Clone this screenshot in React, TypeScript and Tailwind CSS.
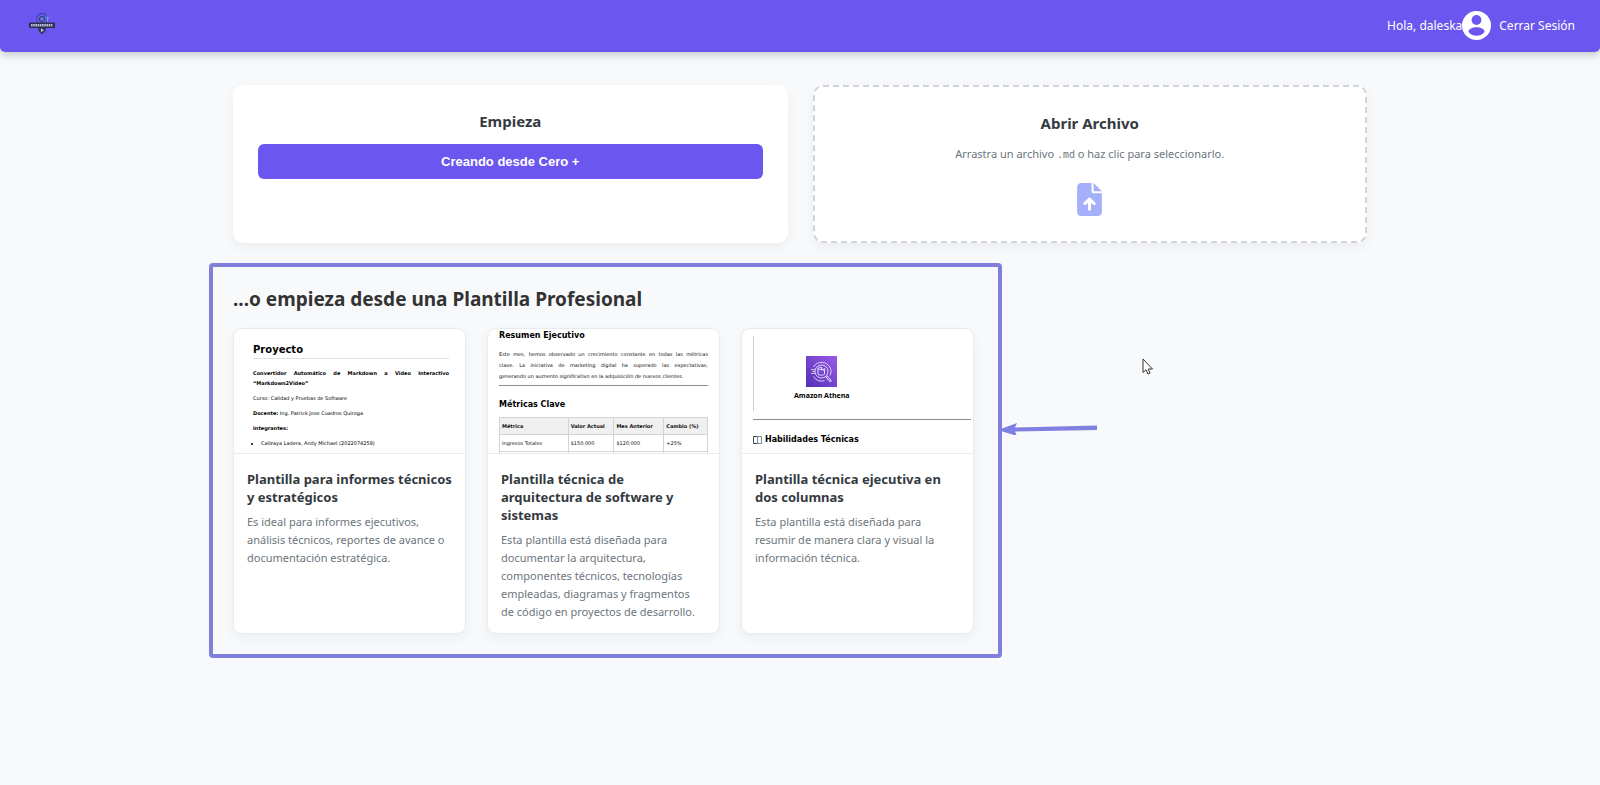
import React from "react";
import { FaFileArrowUp } from "react-icons/fa6";

function Logo() {
  return (
    <svg viewBox="0 0 28 22" className="h-[22px] w-7" role="img" aria-label="Markdown2Video">
      <circle cx="14" cy="6" r="5.5" fill="none" stroke="#3e4aa8" strokeWidth="1.3" />
      <circle cx="14" cy="6" r="2.6" fill="#6a74cc" stroke="#2f3573" />
      <path d="M19.5 9V4M18 5.5 19.5 3.5 21 5.5" stroke="#5f9fe8" fill="none" />
      <path d="M9.5 13h9l-1 5-3.5 3.500-3.500-3.500z" fill="#343a63" />
      <path d="m13 15.500 3 1.700-3 1.700z" fill="#c9d0e4" />
      <rect x="1" y="9.500" width="26" height="5.500" rx="1" fill="#2c3050" />
      <path d="M3 12.200h22" stroke="#bcc1d8" strokeWidth="2.400" strokeDasharray="1.600 .6" />
    </svg>
  );
}

function UserIcon() {
  return (
    <svg viewBox="0 0 29 29" className="size-[29px]" aria-hidden="true">
      <circle cx="14.500" cy="14.500" r="14.500" fill="#fff" />
      <circle cx="14.500" cy="9" r="4.900" fill="#6c56f0" />
      <path d="M6.500 20.800c0-3 4-4.600 8-4.600s8 1.600 8 4.600c-1.500 2.600-4.500 4-8 4s-6.500-1.400-8-4z" fill="#6c56f0" />
    </svg>
  );
}

function AthenaIcon() {
  return (
    <svg viewBox="0 0 31 31" className="size-[31px]" aria-hidden="true">
      <defs>
        <linearGradient id="athena" x1="0" y1="1" x2="1" y2="0">
          <stop offset="0" stopColor="#5130b5" />
          <stop offset="1" stopColor="#9a5ae6" />
        </linearGradient>
      </defs>
      <rect width="31" height="31" fill="url(#athena)" />
      <g fill="none" stroke="#e9defa">
        <path d="M7.500 11a9.500 9.500 0 0 1 17 1.500c1 3 .6 5-.5 7M7.500 20.500a9.500 9.500 0 0 0 11 4.200" strokeWidth="0.900" />
        <circle cx="15.500" cy="15.500" r="6.500" strokeWidth="0.900" />
        <path d="m20 20 5 5.500" strokeWidth="2.600" />
        <path d="m20.500 20.500 4 4.500" stroke="#7d48cf" strokeWidth="1" />
        <path d="M12 12.500v5.500c0 1.500 6.500 1.500 6.500 0v-5.500M12 12.500c0-1.300 3-1.300 3.500-1.300M12 12.500c0 1.200 6.500 1.200 6.500 0M15.500 11v3h3" />
        <path d="M5 13.500h4M6 15.500h3M5 17.500h4" strokeWidth="0.800" />
      </g>
    </svg>
  );
}

function ReportPreview() {
  return (
    <div className="pt-[14px] pr-4 pl-[19px] text-[5px] leading-[10px] text-black">
      <p className="border-b border-[#e2e2e2] pb-[2px] text-[10px] leading-[13px] font-bold">Proyecto</p>
      <p className="mt-[9px] text-justify font-bold">
        Convertidor Automático de Markdown a Video Interactivo “Markdown2Video”
      </p>
      <p className="mt-[5px]">Curso: Calidad y Pruebas de Software</p>
      <p className="mt-[5px]"><b>Docente:</b> Ing. Patrick Jose Cuadros Quiroga</p>
      <p className="mt-[5px] font-bold">Integrantes:</p>
      <ul className="mt-[5px] list-disc pl-2">
        <li>Calizaya Ladera, Andy Michael (2022074258)</li>
      </ul>
    </div>
  );
}

function MetricsPreview() {
  return (
    <div className="px-[11px] pt-[2px] text-[5px] text-[#111]">
      <p className="text-[8px] leading-[10px] font-bold text-black">Resumen Ejecutivo</p>
      <p className="mt-2 leading-[11px]">
        <span className="block [text-align-last:justify]">
          Este mes, hemos observado un crecimiento constante en todas las métricas
        </span>
        <span className="block [text-align-last:justify]">
          clave. La iniciativa de marketing digital ha superado las expectativas,
        </span>
        <span className="block">generando un aumento significativo en la adquisición de nuevos clientes.</span>
      </p>
      <hr className="mt-[3px] border-[#8c8c8c]" />
      <p className="mt-[14px] text-[8px] leading-[10px] font-bold text-black">Métricas Clave</p>
      <table className="mt-[7px] w-full border-collapse text-left leading-[6px] [&_td]:border [&_td]:border-[#d4d4d4] [&_td]:px-[2px] [&_td]:py-[5px] [&_th]:border [&_th]:border-[#d4d4d4] [&_th]:bg-[#f0f0f0] [&_th]:px-[2px] [&_th]:py-[5px]">
        <thead>
          <tr>
            <th className="w-[33%]">Métrica</th>
            <th className="w-[22%]">Valor Actual</th>
            <th className="w-[24%]">Mes Anterior</th>
            <th>Cambio (%)</th>
          </tr>
        </thead>
        <tbody>
          <tr><td>Ingresos Totales</td><td>$150,000</td><td>$120,000</td><td>+25%</td></tr>
          <tr><td /><td /><td /><td /></tr>
        </tbody>
      </table>
    </div>
  );
}

function SkillsPreview() {
  return (
    <div className="pt-[7px] pr-[2px] pl-[11px] text-black">
      <div className="flex h-[75px] border-l border-[#cfcfcf] pt-5 pl-10">
        <div className="flex flex-col items-center gap-1">
          <AthenaIcon />
          <span className="font-['Open_Sans',sans-serif] text-[7px] leading-[10px] font-bold">Amazon Athena</span>
        </div>
      </div>
      <hr className="mt-2 border-[#8c8c8c]" />
      <p className="mt-[15px] flex items-center gap-[3px] text-[8px] leading-[10px] font-bold">
        <svg viewBox="0 0 9 8" className="h-2 w-[9px]" fill="none" aria-hidden="true">
          <path d="M.5.5h4v7h-4z" stroke="#444" />
          <path d="M4.500.5h4v7h-4z" stroke="#6d8ba5" />
        </svg>
        Habilidades Técnicas
      </p>
    </div>
  );
}

const templates = [
  {
    title: "Plantilla para informes técnicos y estratégicos",
    text: "Es ideal para informes ejecutivos, análisis técnicos, reportes de avance o documentación estratégica.",
    Preview: ReportPreview,
  },
  {
    title: "Plantilla técnica de arquitectura de software y sistemas",
    text: "Esta plantilla está diseñada para documentar la arquitectura, componentes técnicos, tecnologías empleadas, diagramas y fragmentos de código en proyectos de desarrollo.",
    Preview: MetricsPreview,
  },
  {
    title: "Plantilla técnica ejecutiva en dos columnas",
    text: "Esta plantilla está diseñada para resumir de manera clara y visual la información técnica.",
    Preview: SkillsPreview,
  },
];

export default function App() {
  return (
    <div className="relative min-h-screen bg-[#f8f9fb] font-['Noto_Sans',sans-serif] text-[#343a40]">
      <header className="flex h-[52px] items-center justify-between rounded-b-[5px] bg-[#6c56f0] pr-[25px] pb-px pl-7 text-[12px] text-white shadow-[0_3px_8px_rgba(0,0,0,0.2)]">
        <a href="#inicio" className="pb-1"><Logo /></a>
        <nav className="flex items-center">
          <span>Hola, daleska</span>
          <UserIcon />
          <a href="#salir" className="ml-2">Cerrar Sesión</a>
        </nav>
      </header>

      <main className="mx-auto max-w-[1182px] px-6 pt-[33px]">
        <div className="grid grid-cols-2 gap-[25px]">
          <section className="rounded-[10px] bg-white p-[25px] text-center shadow-[0_4px_12px_rgba(0,0,0,0.05)]">
            <h2 className="text-[15px] leading-[22px] font-bold">Empieza</h2>
            <button type="button" className="mt-3 h-[35px] w-full rounded-[6px] bg-[#6c56f0] font-['Liberation_Sans',sans-serif] text-[13px] font-bold text-white">
              Creando desde Cero +
            </button>
          </section>
          <label className="flex cursor-pointer flex-col items-center rounded-[10px] border-2 border-dashed border-[#d0d4d9] bg-white p-[25px] text-center shadow-[0_4px_12px_rgba(0,0,0,0.05)]">
            <input type="file" accept=".md" className="sr-only" />
            <span className="text-[15px] leading-[22px] font-bold">Abrir Archivo</span>
            <span className="mt-[10px] text-[11px] leading-5 text-[#6c757d]">
              Arrastra un archivo <code className="font-['Liberation_Mono',monospace] text-[10px]">.md</code> o haz clic para seleccionarlo.
            </span>
            <FaFileArrowUp className="mt-[17px] h-[33px] w-[25px] text-[#a5b0fb]" />
          </label>
        </div>

        <section className="relative mt-5 -ml-6 max-w-[793px] rounded-[4px] border-4 border-[#8080dc] pt-5 pr-6 pb-5 pl-5">
          <h1 className="text-[19px] leading-6 font-bold text-[#333]">...o empieza desde una Plantilla Profesional</h1>
          <div className="mt-[17px] grid grid-cols-3 gap-[21px]">
            {templates.map(({ title, text, Preview }) => (
              <article key={title} className="overflow-hidden rounded-[9px] border border-[#e9ecef] bg-white shadow-[0_4px_12px_rgba(0,0,0,0.05)]">
                <div className="h-[125px] overflow-hidden border-b border-[#e9ecef] font-['DejaVu_Sans',sans-serif]">
                  <Preview />
                </div>
                <div className="pt-4 pr-3 pb-3 pl-[13px]">
                  <h3 className="text-[13px] leading-[18px] font-bold">{title}</h3>
                  <p className="mt-[7px] pr-[2px] text-[11px] leading-[18px] text-[#6c757d]">{text}</p>
                </div>
              </article>
            ))}
          </div>
          <svg viewBox="0 0 100 16" className="absolute top-[152px] left-full h-4 w-[100px]" aria-hidden="true">
            <path d="M0 11 19 4l-2 4.500L99 6.500v4.500l-82 1.500 2 4.500z" fill="#8080e0" />
          </svg>
        </section>
      </main>

      <svg viewBox="0 0 12 17" className="absolute top-[358px] left-[1142px] h-[17px] w-3" aria-hidden="true">
        <path d="M1 1v13.500l3-2.800 2 4.300 2-1-1.800-4h4.300z" fill="#fff" stroke="#333" />
      </svg>
    </div>
  );
}
